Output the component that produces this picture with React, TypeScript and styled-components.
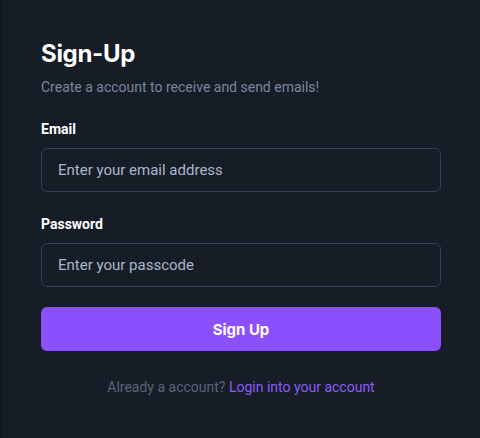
import React from "react";
import styled, { createGlobalStyle } from "styled-components";

const Global = createGlobalStyle`
  html, body { margin: 0; padding: 0; background: #0d1210; }
  body { width: 480px; height: 438px; overflow: hidden; }
`;

const Page = styled.div`
  width: 480px;
  height: 438px;
  display: flex;
  background: #121714;
`;

const Card = styled.div`
  margin-left: 1px;
  flex: 1;
  background: #171d27;
  padding: 38px 39px 0 40px;
  box-sizing: border-box;
  font-family: Roboto, "Liberation Sans", sans-serif;
`;

const Title = styled.h1`
  margin: 0;
  font-family: Inter, "Liberation Sans", sans-serif;
  font-weight: 700;
  font-size: 24px;
  line-height: 32px;
  letter-spacing: -0.3px;
  color: #ffffff;
`;

const Subtitle = styled.p`
  margin: 7px 0 0;
  font-size: 14px;
  line-height: 20px;
  color: #7a879c;
`;

const Field = styled.div<{ $top: number }>`
  display: flex;
  flex-direction: column;
  margin-top: ${(p) => p.$top}px;
`;

const Label = styled.label`
  font-size: 14px;
  line-height: 20px;
  font-weight: 700;
  color: #ffffff;
  margin-bottom: 9px;
`;

const Input = styled.input`
  height: 44px;
  box-sizing: border-box;
  border: 1px solid #2f3f5a;
  border-radius: 6px;
  background: #171d27;
  padding: 0 16px;
  font-family: Roboto, "Liberation Sans", sans-serif;
  font-size: 15px;
  color: #fff;
  outline: none;
  &::placeholder { color: #aab7cd; }
`;

const Button = styled.button`
  margin-top: 20px;
  width: 100%;
  height: 44px;
  border: none;
  border-radius: 6px;
  background: #8b4ffe;
  color: #fff;
  font-family: Inter, "Liberation Sans", sans-serif;
  font-weight: 700;
  font-size: 15px;
`;

const Footer = styled.p`
  margin: 26px 0 0;
  text-align: center;
  font-size: 14px;
  line-height: 20px;
  color: #5b6479;
`;

const Link = styled.a`
  color: #8b5cf6;
  text-decoration: none;
`;

export default function App() {
  return (
    <Page>
      <Global />
      <Card>
        <Title>Sign-Up</Title>
        <Subtitle>Create a account to receive and send emails!</Subtitle>
        <Field $top={22}>
          <Label>Email</Label>
          <Input placeholder="Enter your email address" />
        </Field>
        <Field $top={22}>
          <Label>Password</Label>
          <Input placeholder="Enter your passcode" type="password" />
        </Field>
        <Button>Sign Up</Button>
        <Footer>
          Already a account? <Link href="#">Login into your account</Link>
        </Footer>
      </Card>
    </Page>
  );
}
